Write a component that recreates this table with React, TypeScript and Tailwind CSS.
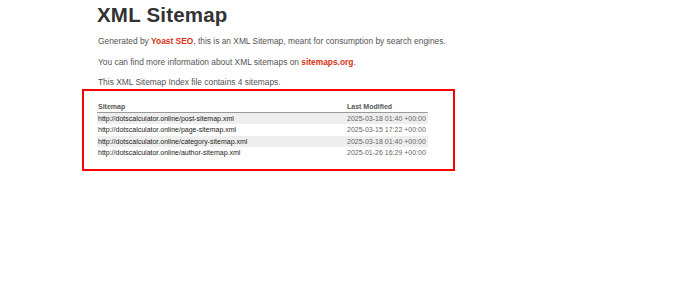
const rows = [
  { loc: 'http://dotscalculator.online/post-sitemap.xml', mod: '2025-03-18 01:40 +00:00' },
  { loc: 'http://dotscalculator.online/page-sitemap.xml', mod: '2025-03-15 17:22 +00:00' },
  { loc: 'http://dotscalculator.online/category-sitemap.xml', mod: '2025-03-18 01:40 +00:00' },
  { loc: 'http://dotscalculator.online/author-sitemap.xml', mod: '2025-01-26 16:29 +00:00' },
];

export default function App() {
  return (
    <div
      className="w-[680px] h-[306px] bg-white text-[#545353] pl-[97px] pt-[3px]"
      style={{ fontFamily: '"Liberation Sans", Arial, sans-serif' }}
    >
      <h1 className="text-[20.5px] leading-[24px] font-bold text-[#333] tracking-[0.2px]">XML Sitemap</h1>

      <div className="mt-[9px] text-[8.4px] leading-[10px] pl-[1px]">
        <p>
          Generated by{' '}
          <a className="text-[#da3114] font-bold">Yoast SEO</a>, this is an XML Sitemap, meant for consumption
          by search engines.
        </p>
        <p className="mt-[10.5px]">
          You can find more information about XML sitemaps on{' '}
          <a className="text-[#da3114] font-bold">sitemaps.org</a>.
        </p>
        <p className="mt-[10px]">This XML Sitemap Index file contains 4 sitemaps.</p>
      </div>

      <div className="mt-[2px] -ml-[15px] w-[373px] h-[82px] border-2 border-[#ff0000] pl-[13px] pt-[10px]">
        <table className="border-collapse w-[331px] text-[7px]">
          <thead>
            <tr className="border-b border-[#9a9a9a]">
              <th className="text-left font-bold text-[#555] h-[11px] leading-[11px] w-[250px] pl-[1px]">Sitemap</th>
              <th className="text-left font-bold text-[#555] h-[11px] leading-[11px]">Last Modified</th>
            </tr>
          </thead>
          <tbody>
            {rows.map((r, i) => (
              <tr key={r.loc} className={i % 2 === 0 ? 'bg-[#eeeeee]' : 'bg-white'}>
                <td className="h-[11.6px] leading-[11.6px] py-0 pl-[1px] text-[#222]">{r.loc}</td>
                <td className="h-[11.6px] leading-[11.6px] py-0 text-[#666]">{r.mod}</td>
              </tr>
            ))}
          </tbody>
        </table>
      </div>
    </div>
  );
}
